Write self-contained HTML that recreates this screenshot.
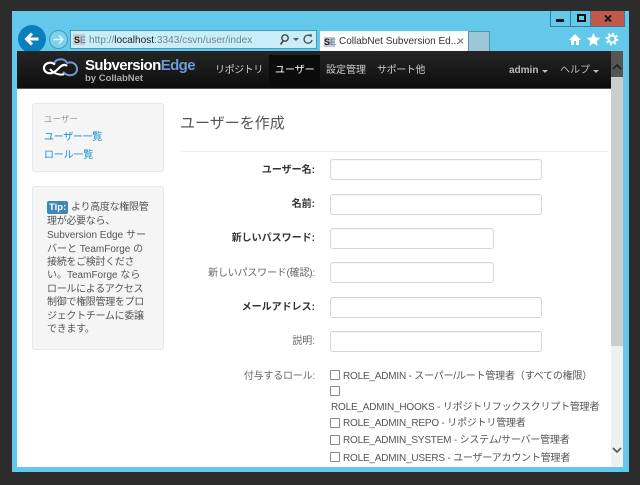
<!DOCTYPE html>
<html><head><meta charset="utf-8"><style>
*{box-sizing:border-box}
html,body{margin:0;padding:0;width:640px;height:485px;overflow:hidden;background:#2c2c2c;font-family:"Liberation Sans","Noto Sans CJK JP",sans-serif;}
div,span,svg{position:absolute}
.t{white-space:nowrap;font-size:11px;line-height:14px;color:#555}
.l{text-align:right;right:325px;color:#666;font-size:10px}
.b{font-weight:bold;color:#333}
.i{left:330px;width:212px;height:21px;background:#fff;border:1px solid #d6d6d6;border-radius:3px;box-shadow:inset 0 1px 1px rgba(0,0,0,.04)}
.c{left:330px;width:10px;height:10px;background:#fff;border:1px solid #888;border-radius:1px}
.n{color:#ccc;font-size:10px;font-weight:normal;white-space:nowrap;line-height:14px}
.r{left:343px;font-size:10px;letter-spacing:-.2px}
.p{left:47px;font-size:10px}
.q{letter-spacing:-.3px}
</style></head><body>
<div style="left:12px;top:11px;width:617px;height:461px;background:#63c8ea"></div>
<div style="left:550px;top:11px;width:21px;height:16px;background:#63c8ea;border:1px solid #3c7c94;border-top:0"></div>
<div style="left:571px;top:11px;width:20px;height:16px;background:#63c8ea;border:1px solid #3c7c94;border-left:0;border-top:0"></div>
<div style="left:591px;top:11px;width:34px;height:16px;background:#c0584e;border:1px solid #3c7c94;border-left:0;border-top:0"></div>
<div style="left:556px;top:19px;width:8px;height:3px;background:#111"></div>
<div style="left:577px;top:14px;width:9px;height:8px;border:2px solid #111"></div>
<svg style="left:604px;top:15px" width="8" height="7" viewBox="0 0 8 7"><path d="M1 .5L7 6.500M7 .5L1 6.500" stroke="#111" stroke-width="1.800"/></svg>
<!-- back / forward -->
<div style="left:18px;top:25px;width:28px;height:28px;border-radius:50%;background:#0a7fc0"></div>
<svg style="left:24px;top:31px" width="16" height="16" viewBox="0 0 16 16"><path d="M14.500 8H3M8 2.500L2.500 8 8 13.500" fill="none" stroke="#fff" stroke-width="3"/></svg>
<div style="left:49px;top:30px;width:19px;height:19px;border-radius:50%;background:#7fd0ec;border:1px solid #3d9cc0"></div>
<svg style="left:52px;top:33px" width="13" height="13" viewBox="0 0 13 13"><path d="M1.500 6.500H11M7 2.500L11 6.500 7 10.500" fill="none" stroke="#e6f6fb" stroke-width="1.400"/></svg>
<!-- address -->
<div style="left:70px;top:30px;width:247px;height:19px;background:#c9eefa;border:1px solid #3f9dbf"></div>
<div style="left:73px;top:34px;width:12px;height:11px;background:#c8c8c8"></div>
<div class="t" style="left:74px;top:33px;font-size:9px;font-weight:bold;color:#222">S<span style="position:static;color:#6d8fc7">E</span></div>
<div class="t" style="left:89px;top:34px;font-size:10.100px;color:#6e8490">http://<span style="position:static;color:#222">localhost</span>:3343/csvn/user/index</div>
<svg style="left:279px;top:33px" width="36" height="13" viewBox="0 0 36 13"><circle cx="6" cy="5" r="3.200" fill="none" stroke="#444" stroke-width="1.400"/><path d="M4 8L1.500 11.500" stroke="#444" stroke-width="1.600"/><path d="M14 5h6l-3 3z" fill="#555"/><path d="M32 3.500a4 4 0 1 0 1 3.500" fill="none" stroke="#555" stroke-width="1.400"/><path d="M30 1l3 .5-.5 3z" fill="#555"/></svg>
<!-- tabs -->
<div style="left:320px;top:31px;width:148px;height:20px;background:#fff"></div>
<div style="left:324px;top:37px;width:11px;height:10px;background:#c8c8c8"></div>
<div class="t" style="left:324px;top:35px;font-size:9px;font-weight:bold;color:#222">S<span style="position:static;color:#6d8fc7">E</span></div>
<div class="t" style="left:339px;top:35px;font-size:10px;color:#333">CollabNet Subversion Ed...</div>
<div class="t" style="left:457px;top:34px;font-size:12px;color:#888;font-weight:bold">×</div>
<div style="left:468px;top:31px;width:22px;height:20px;background:#9fc6d6;border:1px solid #4d96b0;border-bottom:0"></div>
<!-- toolbar icons -->
<svg style="left:568px;top:33px" width="14" height="13" viewBox="0 0 14 13"><path d="M7 1L1 7h2v5h3V8h2v4h3V7h2z" fill="#fff"/></svg>
<svg style="left:586px;top:32px" width="15" height="14" viewBox="0 0 15 14"><path d="M7.500 1l2 4.400 4.800.5-3.600 3.200 1 4.700-4.200-2.400-4.200 2.400 1-4.700L.7 5.900l4.800-.5z" fill="#fff"/></svg>
<svg style="left:605px;top:32px" width="14" height="14" viewBox="0 0 14 14"><circle cx="7" cy="7" r="3.600" fill="none" stroke="#fff" stroke-width="2"/><circle cx="7" cy="7" r="5.400" fill="none" stroke="#fff" stroke-width="2" stroke-dasharray="2 2.240"/></svg>
<!-- page -->
<div style="left:17px;top:89px;width:594px;height:378px;background:#fff"></div>
<div style="left:17px;top:51px;width:594px;height:38px;background:linear-gradient(#252525,#0d0d0d);border-bottom:1px solid #555"></div>
<div style="left:269px;top:55px;width:51px;height:33px;background:#0b0b0b"></div>
<!-- scrollbar -->
<div style="left:611px;top:51px;width:12px;height:416px;background:#f0f0f0"></div>
<div style="left:611px;top:51px;width:12px;height:26px;background:#555"></div>
<div style="left:611px;top:77px;width:12px;height:269px;background:#cdcdcd"></div>
<svg style="left:612px;top:63px" width="10" height="8" viewBox="0 0 10 8"><path d="M1 6l4-4 4 4" fill="none" stroke="#222" stroke-width="1.600"/></svg>
<svg style="left:612px;top:446px" width="10" height="8" viewBox="0 0 10 8"><path d="M1 2l4 4 4-4" fill="none" stroke="#555" stroke-width="1.600"/></svg>
<!-- logo -->
<svg style="left:42px;top:56px" width="38" height="24" viewBox="0 0 38 24"><path d="M13 8.500C9 5 2 7 2 12c0 4 4 6 8 5 3-.8 6-4 8-6 2-2 5-3 7-1" fill="none" stroke="#fff" stroke-width="2.200"/><path d="M12 7C15 2 23 2 25 7c5-2 10 1 10 6 0 5-5 7-9 6-2-.5-4-2-5-3" fill="none" stroke="#6c9ad6" stroke-width="2"/><path d="M8 13c3 4 10 7 14 5" fill="none" stroke="#fff" stroke-width="2"/></svg>
<div class="t" style="left:85px;top:57px;font-size:15px;line-height:18px;font-weight:bold;color:#fff;letter-spacing:-.6px">Subversion<span style="position:static;color:#6c9ad6">Edge</span></div>
<div class="t" style="left:85px;top:72px;font-size:9.500px;line-height:13px;font-weight:bold;color:#aaa">by CollabNet</div>
<!-- nav -->
<div class="n" style="left:215px;top:64px;letter-spacing:-.4px">リポジトリ</div>
<div class="n" style="left:275px;top:64px;color:#fff">ユーザー</div>
<div class="n" style="left:326px;top:64px">設定管理</div>
<div class="n" style="left:377px;top:64px;letter-spacing:-.4px">サポート他</div>
<div class="n" style="left:509px;top:64px;font-weight:bold;color:#bbb">admin</div>
<div style="left:542px;top:70px;border:3px solid transparent;border-top:3px solid #bbb"></div>
<div class="n" style="left:560px;top:64px;color:#bbb">ヘルプ</div>
<div style="left:593px;top:70px;border:3px solid transparent;border-top:3px solid #bbb"></div>
<!-- sidebar -->
<div style="left:32px;top:103px;width:132px;height:69px;background:#f5f5f5;border:1px solid #e8e8e8;border-radius:3px"></div>
<div class="t" style="left:44px;top:112px;font-size:8.500px;color:#999">ユーザー</div>
<div class="t" style="left:44px;top:131px;font-size:10px;letter-spacing:-.3px;color:#0f8fd0">ユーザー一覧</div>
<div class="t" style="left:44px;top:149px;font-size:10px;color:#0f8fd0;letter-spacing:-.2px">ロール一覧</div>
<div style="left:32px;top:186px;width:132px;height:164px;background:#f5f5f5;border:1px solid #e8e8e8;border-radius:3px"></div>
<div style="left:47px;top:201px;width:21px;height:13px;background:#3d89b3;border-radius:2px"></div>
<div class="t" style="left:49px;top:201px;font-size:9.500px;line-height:13px;font-weight:bold;color:#fff">Tip:</div>
<div class="t q" style="left:71px;top:201px;font-size:10px">より高度な権限管</div>
<div class="t p q" style="top:215px">理が必要なら、</div>
<div class="t p" style="top:229px">Subversion Edge サー</div>
<div class="t p" style="top:243px">バーと TeamForge の</div>
<div class="t p q" style="top:256px">接続をご検討くださ</div>
<div class="t p" style="top:269px">い。TeamForge なら</div>
<div class="t p q" style="top:283px">ロールによるアクセス</div>
<div class="t p q" style="top:296px">制御で権限管理をプロ</div>
<div class="t p q" style="top:310px">ジェクトチームに委譲</div>
<div class="t p q" style="top:323px">できます。</div>
<!-- main -->
<div class="t" style="left:180px;top:114px;font-size:15px;line-height:20px;color:#555">ユーザーを作成</div>
<div style="left:180px;top:151px;width:428px;height:1px;background:#eee"></div>
<div class="t l b" style="top:164px">ユーザー名:</div>
<div class="i" style="top:159px;width:212px"></div>
<div class="t l b" style="top:198px">名前:</div>
<div class="i" style="top:194px"></div>
<div class="t l b" style="top:232px">新しいパスワード:</div>
<div class="i" style="top:228px;width:164px"></div>
<div class="t l" style="top:267px;letter-spacing:-.2px">新しいパスワード(確認):</div>
<div class="i" style="top:262px;width:164px"></div>
<div class="t l b" style="top:301px">メールアドレス:</div>
<div class="i" style="top:297px"></div>
<div class="t l" style="top:335px">説明:</div>
<div class="i" style="top:331px"></div>
<div class="t l" style="top:370px;letter-spacing:-.2px">付与するロール:</div>
<div class="c" style="top:370px"></div>
<div class="t r" style="top:370px">ROLE_ADMIN - スーパー/ルート管理者（すべての権限）</div>
<div class="c" style="top:386px"></div>
<div class="t r" style="left:331px;top:401px">ROLE_ADMIN_HOOKS - リポジトリフックスクリプト管理者</div>
<div class="c" style="top:418px"></div>
<div class="t r" style="top:417px">ROLE_ADMIN_REPO - リポジトリ管理者</div>
<div class="c" style="top:435px"></div>
<div class="t r" style="top:434px">ROLE_ADMIN_SYSTEM - システム/サーバー管理者</div>
<div class="c" style="top:452px"></div>
<div class="t r" style="top:452px">ROLE_ADMIN_USERS - ユーザーアカウント管理者</div>
</body></html>
